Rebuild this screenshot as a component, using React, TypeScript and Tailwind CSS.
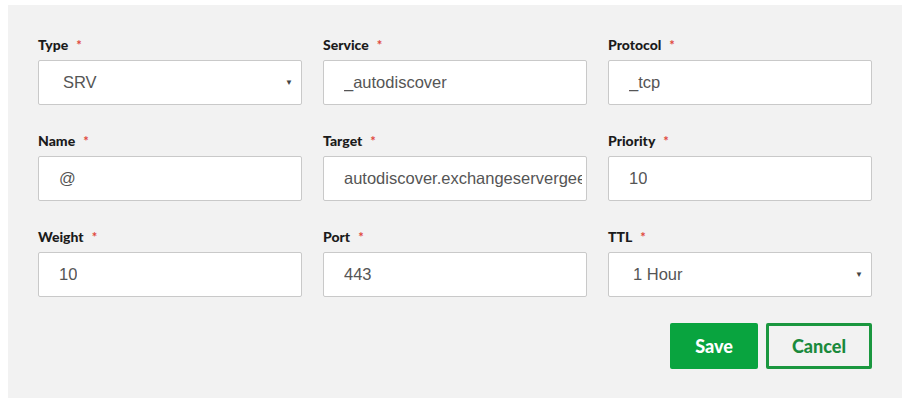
import React from "react";

interface FieldProps {
  label: string;
  value: string;
  select?: boolean;
}

const labelFont = { fontFamily: "Lato, 'Open Sans', Arial, sans-serif" };

const Field: React.FC<FieldProps> = ({ label, value, select = false }) => (
  <div className="flex flex-col">
    <div className="h-5 flex items-center text-[14px] font-black text-[#1b1b1b] leading-none" style={labelFont}>
      {label}
      <span className="ml-[8px] text-[#e0463a] text-[13px] font-bold">*</span>
    </div>
    <div
      className={`mt-[5px] h-[45px] bg-white border border-[#c9c9c9] rounded-[2px] flex items-center justify-between text-[16.5px] text-[#555] whitespace-nowrap overflow-hidden ${
        select ? "pl-[24px] pr-[8px]" : "pl-[20px] pr-[4px]"
      }`}
      style={{ fontFamily: "'Liberation Sans', Arial, sans-serif" }}
    >
      <span className="overflow-hidden">{value}</span>
      {select && <span className="text-[8px] text-[#444] ml-2">▼</span>}
    </div>
  </div>
);

export default function App() {
  return (
    <div className="w-[909px] h-[407px] bg-white pt-[5px] pl-[8px]">
      <div className="w-[894px] h-[393px] bg-[#f2f2f2] pl-[30px] pt-[30px]">
        <div className="grid grid-cols-[264px_264px_264px] gap-x-[21px] gap-y-[26px]">
          <Field label="Type" value="SRV" select />
          <Field label="Service" value="_autodiscover" />
          <Field label="Protocol" value="_tcp" />
          <Field label="Name" value="@" />
          <Field label="Target" value="autodiscover.exchangeservergeek.com" />
          <Field label="Priority" value="10" />
          <Field label="Weight" value="10" />
          <Field label="Port" value="443" />
          <Field label="TTL" value="1 Hour" select />
        </div>
        <div className="w-[834px] flex justify-end gap-[8px] mt-[26px]" style={labelFont}>
          <button className="w-[88px] h-[46px] bg-[#09a43f] text-white text-[18px] font-black rounded-[2px]">
            Save
          </button>
          <button className="w-[106px] h-[46px] border-[3px] border-[#1a973f] text-[#1a8a3c] text-[18px] font-black rounded-[2px] bg-transparent">
            Cancel
          </button>
        </div>
      </div>
    </div>
  );
}
